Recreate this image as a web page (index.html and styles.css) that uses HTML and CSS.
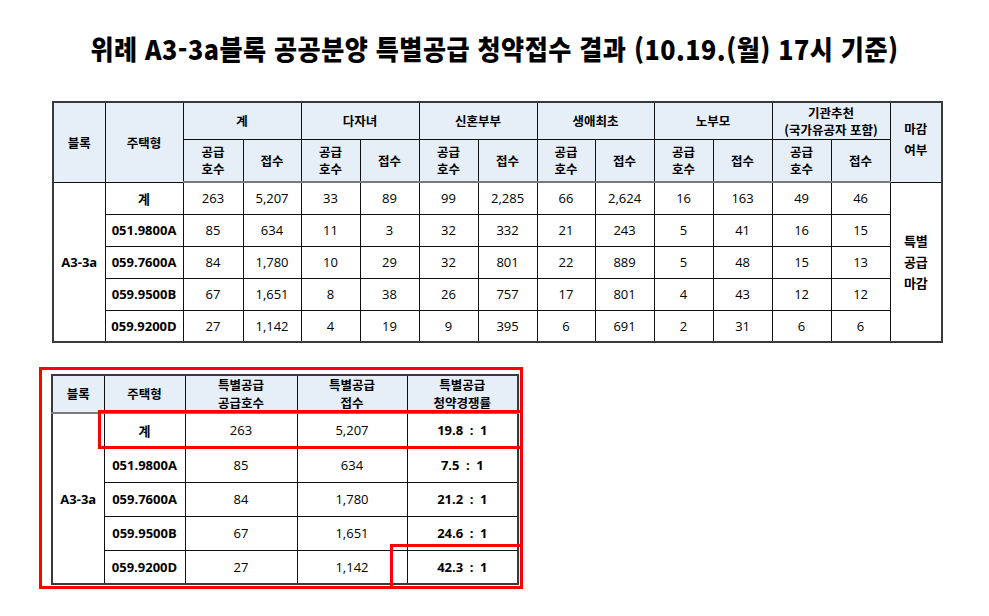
FILE: index.html
```html
<!DOCTYPE html>
<html lang="ko">
<head>
<meta charset="utf-8">
<title>위례 A3-3a블록 공공분양 특별공급 청약접수 결과</title>
<link rel="stylesheet" href="styles.css">
</head>
<body>
<div class="page">
  <h1 class="title"><span class="title-text">위례 A3-3a블록 공공분양 특별공급 청약접수 결과 (10.19.(월) 17시 기준)</span></h1>

  <table class="grid grid-main">
    <colgroup>
      <col class="c52"><col class="c78"><col class="c60"><col class="c58">
      <col class="c59"><col class="c59"><col class="c59"><col class="c59">
      <col class="c58"><col class="c59"><col class="c59"><col class="c59">
      <col class="c59"><col class="c59"><col class="c52">
    </colgroup>
    <thead>
      <tr class="h1row">
        <th rowspan="2">블록</th>
        <th rowspan="2">주택형</th>
        <th colspan="2">계</th>
        <th colspan="2">다자녀</th>
        <th colspan="2">신혼부부</th>
        <th colspan="2">생애최초</th>
        <th colspan="2">노부모</th>
        <th colspan="2" class="two">기관추천<br>(국가유공자 포함)</th>
        <th rowspan="2" class="up">마감<br>여부</th>
      </tr>
      <tr class="h2row">
        <th class="two">공급<br>호수</th><th>접수</th>
        <th class="two">공급<br>호수</th><th>접수</th>
        <th class="two">공급<br>호수</th><th>접수</th>
        <th class="two">공급<br>호수</th><th>접수</th>
        <th class="two">공급<br>호수</th><th>접수</th>
        <th class="two">공급<br>호수</th><th>접수</th>
      </tr>
    </thead>
    <tbody>
      <tr>
        <td rowspan="5" class="b">A3-3a</td>
        <td class="b kr">계</td>
        <td>263</td><td>5,207</td><td>33</td><td>89</td><td>99</td><td>2,285</td>
        <td>66</td><td>2,624</td><td>16</td><td>163</td><td>49</td><td>46</td>
        <td rowspan="5" class="b kr stack">특별<br>공급<br>마감</td>
      </tr>
      <tr>
        <td class="b">051.9800A</td>
        <td>85</td><td>634</td><td>11</td><td>3</td><td>32</td><td>332</td>
        <td>21</td><td>243</td><td>5</td><td>41</td><td>16</td><td>15</td>
      </tr>
      <tr>
        <td class="b">059.7600A</td>
        <td>84</td><td>1,780</td><td>10</td><td>29</td><td>32</td><td>801</td>
        <td>22</td><td>889</td><td>5</td><td>48</td><td>15</td><td>13</td>
      </tr>
      <tr>
        <td class="b">059.9500B</td>
        <td>67</td><td>1,651</td><td>8</td><td>38</td><td>26</td><td>757</td>
        <td>17</td><td>801</td><td>4</td><td>43</td><td>12</td><td>12</td>
      </tr>
      <tr>
        <td class="b">059.9200D</td>
        <td>27</td><td>1,142</td><td>4</td><td>19</td><td>9</td><td>395</td>
        <td>6</td><td>691</td><td>2</td><td>31</td><td>6</td><td>6</td>
      </tr>
    </tbody>
  </table>

  <div class="sub-wrap">
    <table class="grid grid-sub">
      <colgroup>
        <col class="s52"><col class="s81"><col class="s112"><col class="s110"><col class="s111">
      </colgroup>
      <thead>
        <tr class="sh">
          <th>블록</th>
          <th>주택형</th>
          <th>특별공급<br>공급호수</th>
          <th>특별공급<br>접수</th>
          <th>특별공급<br>청약경쟁률</th>
        </tr>
      </thead>
      <tbody>
        <tr class="r34"><td rowspan="5" class="b">A3-3a</td><td class="b kr">계</td><td>263</td><td>5,207</td><td class="b">19.8&ensp;:&ensp;1</td></tr>
        <tr class="r35"><td class="b">051.9800A</td><td>85</td><td>634</td><td class="b">7.5&ensp;:&ensp;1</td></tr>
        <tr class="r34"><td class="b">059.7600A</td><td>84</td><td>1,780</td><td class="b">21.2&ensp;:&ensp;1</td></tr>
        <tr class="r34"><td class="b">059.9500B</td><td>67</td><td>1,651</td><td class="b">24.6&ensp;:&ensp;1</td></tr>
        <tr class="r34"><td class="b">059.9200D</td><td>27</td><td>1,142</td><td class="b">42.3&ensp;:&ensp;1</td></tr>
      </tbody>
    </table>
    <div class="mark mark-outer"></div>
    <div class="mark mark-total"></div>
    <div class="mark mark-max"></div>
  </div>
</div>
</body>
</html>
```

FILE: styles.css
```css
html, body {
  margin: 0;
  padding: 0;
  background: #ffffff;
}

.page {
  box-sizing: border-box;
  min-height: 616px;
  padding-top: 35px;
  font-family: "Open Sans", "Noto Sans CJK KR", sans-serif;
  color: #000;
}

.title {
  margin: 0;
  height: 28px;
  text-align: center;
  font-family: "Noto Sans CJK KR", sans-serif;
  font-weight: 900;
  font-size: 27px;
  line-height: 28px;
  white-space: nowrap;
}

.title-text {
  display: inline-block;
  transform: scaleX(0.93);
  transform-origin: center;
  letter-spacing: 0.5px;
}

.grid {
  border-collapse: collapse;
  table-layout: fixed;
  font-size: 13px;
  text-align: center;
}

.grid th,
.grid td {
  border: 1px solid #111;
  padding: 0;
  vertical-align: middle;
  white-space: nowrap;
}

.grid th {
  background: #e6eef8;
  font-family: "Noto Sans CJK KR", sans-serif;
  font-weight: 700;
  font-size: 12.5px;
  line-height: 17px;
}

.grid .kr {
  font-family: "Noto Sans CJK KR", sans-serif;
}

.grid thead tr:last-child th,
.grid .sh th {
  border-bottom: 2px solid #7a7a7a;
}

.grid-main {
  margin-top: 38px;
  margin-left: 52px;
  width: 889px;
  border: 2px solid #3a3a3a;
}

.grid-main .h1row { height: 37px; }
.grid-main .h2row { height: 43px; }
.grid-main tbody tr { height: 32px; }

.c52 { width: 52px; }
.c58 { width: 58px; }
.c59 { width: 59px; }
.c60 { width: 60px; }
.c78 { width: 78px; }

.grid .up { padding-bottom: 6px; line-height: 21px; }
.grid .stack { line-height: 21px; }

.b { font-weight: 700; }

.sub-wrap {
  position: relative;
  margin-top: 31px;
  margin-left: 51px;
  width: 466px;
}

.grid-sub {
  width: 466px;
  border: 2px solid #3a3a3a;
}

.grid-sub .sh { height: 38px; }
.grid-sub .sh th { line-height: 18px; }
.grid-sub .r34 { height: 34px; }
.grid-sub .r35 { height: 35px; }

.s52 { width: 52px; }
.s81 { width: 81px; }
.s110 { width: 110px; }
.s111 { width: 111px; }
.s112 { width: 112px; }

.mark {
  position: absolute;
  border: 3px solid #ff0000;
  box-sizing: border-box;
  pointer-events: none;
}

.mark-outer { left: -12px; top: -7px; width: 484px; height: 222px; }
.mark-total { left: 47px; top: 36px; width: 425px; height: 39px; }
.mark-max { left: 339px; top: 170px; width: 133px; height: 45px; }
```
